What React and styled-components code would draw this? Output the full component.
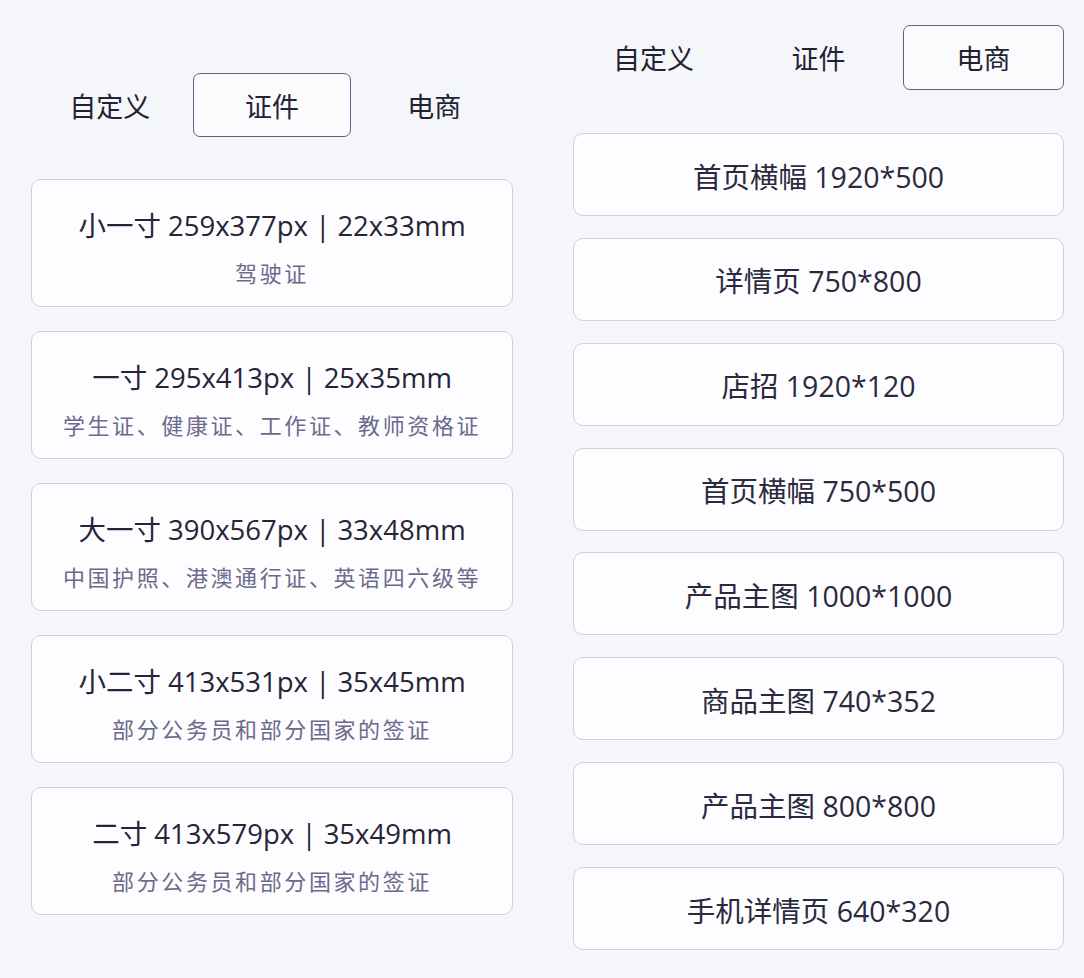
import React from "react";
import styled, { createGlobalStyle } from "styled-components";

const Global = createGlobalStyle`
  html, body { margin: 0; padding: 0; background: #f5f6fa; }
  body { font-family: "Open Sans", "Noto Sans CJK SC", sans-serif; color: #26243a; }
`;

const Page = styled.div`
  width: 1084px;
  height: 978px;
  box-sizing: border-box;
  padding: 25px 20px 0 31px;
  display: flex;
  align-items: flex-start;
  gap: 60px;
  background: #f5f6fa;
`;

const Panel = styled.div`
  width: ${(p) => p.$width}px;
  margin-top: ${(p) => p.$offset}px;
  display: flex;
  flex-direction: column;
`;

const Tabs = styled.div`
  display: grid;
  grid-template-columns: repeat(3, 1fr);
  gap: ${(p) => p.$gap}px;
  margin-bottom: ${(p) => p.$mb}px;
`;

const Tab = styled.div`
  height: ${(p) => p.$h}px;
  box-sizing: border-box;
  display: flex;
  align-items: center;
  justify-content: center;
  font-family: "Noto Sans CJK SC", sans-serif;
  font-size: 27px;
  color: #232233;
  border: 1.5px solid ${(p) => (p.$active ? "#56648a" : "transparent")};
  border-radius: 7px;
  background: ${(p) => (p.$active ? "#fbfbfe" : "transparent")};
`;

const List = styled.div`
  display: flex;
  flex-direction: column;
  gap: ${(p) => p.$gap}px;
`;

const Card = styled.div`
  box-sizing: border-box;
  height: ${(p) => p.$h}px;
  background: #fdfdff;
  border: 1px solid #cfd1db;
  border-radius: 10px;
  display: flex;
  flex-direction: column;
  align-items: center;
  justify-content: center;
`;

const SizeCard = styled(Card)`
  justify-content: flex-start;
  padding-top: 28px;
`;

const Title = styled.div`
  font-size: 27.5px;
  line-height: 36px;
  color: #262438;
  white-space: nowrap;
`;

const Sub = styled.div`
  margin-top: 13px;
  font-family: "Noto Sans CJK SC", sans-serif;
  font-size: 22px;
  line-height: 30px;
  letter-spacing: 2.6px;
  color: #6c6a8c;
  white-space: nowrap;
`;

const ShopText = styled.div`
  font-size: 28.5px;
  line-height: 36px;
  padding-top: 4px;
  color: #2b293d;
  white-space: nowrap;
`;

const idItems = [
  ["小一寸 259x377px | 22x33mm", "驾驶证"],
  ["一寸 295x413px | 25x35mm", "学生证、健康证、工作证、教师资格证"],
  ["大一寸 390x567px | 33x48mm", "中国护照、港澳通行证、英语四六级等"],
  ["小二寸 413x531px | 35x45mm", "部分公务员和部分国家的签证"],
  ["二寸 413x579px | 35x49mm", "部分公务员和部分国家的签证"],
];

const shopItems = [
  "首页横幅 1920*500",
  "详情页 750*800",
  "店招 1920*120",
  "首页横幅 750*500",
  "产品主图 1000*1000",
  "商品主图 740*352",
  "产品主图 800*800",
  "手机详情页 640*320",
];

const tabNames = ["自定义", "证件", "电商"];

export default function App() {
  return (
    <>
      <Global />
      <Page>
        <Panel $width={482} $offset={48}>
          <Tabs $gap={5} $mb={42}>
            {tabNames.map((t) => (
              <Tab key={t} $h={64} $active={t === "证件"}>
                {t}
              </Tab>
            ))}
          </Tabs>
          <List $gap={24}>
            {idItems.map(([title, sub]) => (
              <SizeCard key={title} $h={128}>
                <Title>{title}</Title>
                <Sub>{sub}</Sub>
              </SizeCard>
            ))}
          </List>
        </Panel>
        <Panel $width={491} $offset={0}>
          <Tabs $gap={4} $mb={43}>
            {tabNames.map((t) => (
              <Tab key={t} $h={65} $active={t === "电商"}>
                {t}
              </Tab>
            ))}
          </Tabs>
          <List $gap={21.86}>
            {shopItems.map((s) => (
              <Card key={s} $h={83}>
                <ShopText>{s}</ShopText>
              </Card>
            ))}
          </List>
        </Panel>
      </Page>
    </>
  );
}
